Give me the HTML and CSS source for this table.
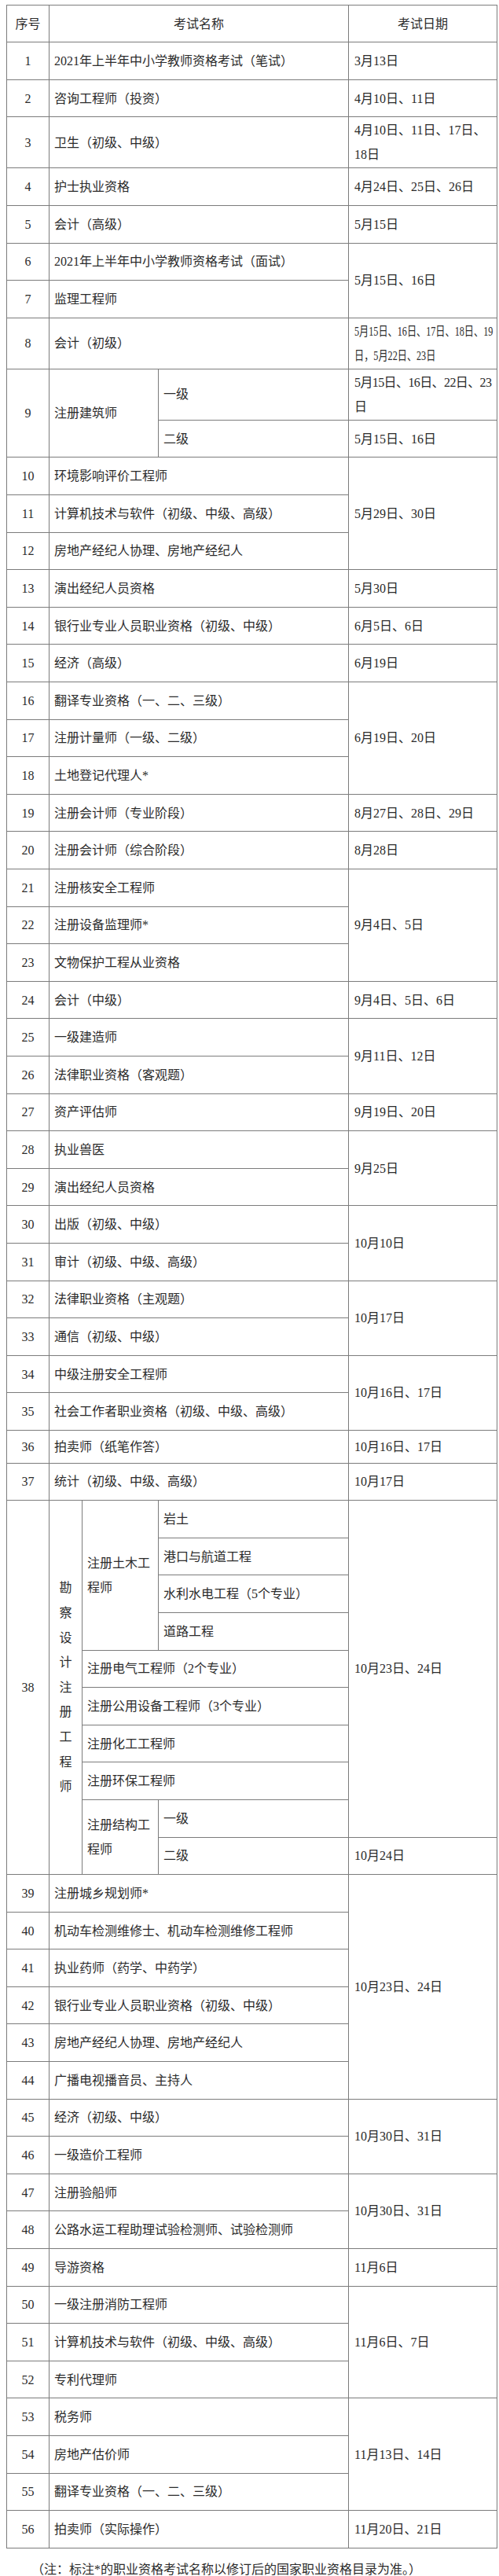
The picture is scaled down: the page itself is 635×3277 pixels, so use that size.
FILE: index.html
```html
<!DOCTYPE html>
<html lang="zh-CN">
<head>
<meta charset="utf-8">
<title>2021年度专业技术人员职业资格考试工作计划</title>
<link rel="stylesheet" href="styles.css">
</head>
<body>
<table class="exam">
  <colgroup>
    <col class="c-no"><col class="c-a"><col class="c-b"><col class="c-c"><col class="c-date">
  </colgroup>
  <tr class="head"><th>序号</th><th colspan="3">考试名称</th><th>考试日期</th></tr>
  <tr><td class="no">1</td><td class="name" colspan="3">2021年上半年中小学教师资格考试（笔试）</td><td class="date">3月13日</td></tr>
  <tr><td class="no">2</td><td class="name" colspan="3">咨询工程师（投资）</td><td class="date">4月10日、11日</td></tr>
  <tr><td class="no">3</td><td class="name" colspan="3">卫生（初级、中级）</td><td class="date">4月10日、11日、17日、<br>18日</td></tr>
  <tr><td class="no">4</td><td class="name" colspan="3">护士执业资格</td><td class="date">4月24日、25日、26日</td></tr>
  <tr><td class="no">5</td><td class="name" colspan="3">会计（高级）</td><td class="date">5月15日</td></tr>
  <tr><td class="no">6</td><td class="name" colspan="3">2021年上半年中小学教师资格考试（面试）</td><td class="date" rowspan="2">5月15日、16日</td></tr>
  <tr><td class="no">7</td><td class="name" colspan="3">监理工程师</td></tr>
  <tr><td class="no">8</td><td class="name" colspan="3">会计（初级）</td><td class="date"><span class="squeeze sq-long">5月15日、16日、17日、18日、19</span><br><span class="squeeze sq-short">日，5月22日、23日</span></td></tr>
  <tr><td class="no" rowspan="2">9</td><td class="name" colspan="2" rowspan="2">注册建筑师</td><td class="name">一级</td><td class="date tight">5月15日、16日、22日、23<br>日</td></tr>
  <tr><td class="name">二级</td><td class="date">5月15日、16日</td></tr>
  <tr><td class="no">10</td><td class="name" colspan="3">环境影响评价工程师</td><td class="date" rowspan="3">5月29日、30日</td></tr>
  <tr><td class="no">11</td><td class="name" colspan="3">计算机技术与软件（初级、中级、高级）</td></tr>
  <tr><td class="no">12</td><td class="name" colspan="3">房地产经纪人协理、房地产经纪人</td></tr>
  <tr><td class="no">13</td><td class="name" colspan="3">演出经纪人员资格</td><td class="date">5月30日</td></tr>
  <tr><td class="no">14</td><td class="name" colspan="3">银行业专业人员职业资格（初级、中级）</td><td class="date">6月5日、6日</td></tr>
  <tr><td class="no">15</td><td class="name" colspan="3">经济（高级）</td><td class="date">6月19日</td></tr>
  <tr><td class="no">16</td><td class="name" colspan="3">翻译专业资格（一、二、三级）</td><td class="date" rowspan="3">6月19日、20日</td></tr>
  <tr><td class="no">17</td><td class="name" colspan="3">注册计量师（一级、二级）</td></tr>
  <tr><td class="no">18</td><td class="name" colspan="3">土地登记代理人*</td></tr>
  <tr><td class="no">19</td><td class="name" colspan="3">注册会计师（专业阶段）</td><td class="date">8月27日、28日、29日</td></tr>
  <tr><td class="no">20</td><td class="name" colspan="3">注册会计师（综合阶段）</td><td class="date">8月28日</td></tr>
  <tr><td class="no">21</td><td class="name" colspan="3">注册核安全工程师</td><td class="date" rowspan="3">9月4日、5日</td></tr>
  <tr><td class="no">22</td><td class="name" colspan="3">注册设备监理师*</td></tr>
  <tr><td class="no">23</td><td class="name" colspan="3">文物保护工程从业资格</td></tr>
  <tr><td class="no">24</td><td class="name" colspan="3">会计（中级）</td><td class="date">9月4日、5日、6日</td></tr>
  <tr><td class="no">25</td><td class="name" colspan="3">一级建造师</td><td class="date" rowspan="2">9月11日、12日</td></tr>
  <tr><td class="no">26</td><td class="name" colspan="3">法律职业资格（客观题）</td></tr>
  <tr><td class="no">27</td><td class="name" colspan="3">资产评估师</td><td class="date">9月19日、20日</td></tr>
  <tr><td class="no">28</td><td class="name" colspan="3">执业兽医</td><td class="date" rowspan="2">9月25日</td></tr>
  <tr><td class="no">29</td><td class="name" colspan="3">演出经纪人员资格</td></tr>
  <tr><td class="no">30</td><td class="name" colspan="3">出版（初级、中级）</td><td class="date" rowspan="2">10月10日</td></tr>
  <tr><td class="no">31</td><td class="name" colspan="3">审计（初级、中级、高级）</td></tr>
  <tr><td class="no">32</td><td class="name" colspan="3">法律职业资格（主观题）</td><td class="date" rowspan="2">10月17日</td></tr>
  <tr><td class="no">33</td><td class="name" colspan="3">通信（初级、中级）</td></tr>
  <tr><td class="no">34</td><td class="name" colspan="3">中级注册安全工程师</td><td class="date" rowspan="2">10月16日、17日</td></tr>
  <tr><td class="no">35</td><td class="name" colspan="3">社会工作者职业资格（初级、中级、高级）</td></tr>
  <tr class="short"><td class="no">36</td><td class="name" colspan="3">拍卖师（纸笔作答）</td><td class="date">10月16日、17日</td></tr>
  <tr><td class="no">37</td><td class="name" colspan="3">统计（初级、中级、高级）</td><td class="date">10月17日</td></tr>
  <tr><td class="no" rowspan="10">38</td><td class="vert" rowspan="10">勘<br>察<br>设<br>计<br>注<br>册<br>工<br>程<br>师</td><td class="name wrap" rowspan="4">注册土木工<br>程师</td><td class="name">岩土</td><td class="date" rowspan="9">10月23日、24日</td></tr>
  <tr><td class="name">港口与航道工程</td></tr>
  <tr><td class="name">水利水电工程（5个专业）</td></tr>
  <tr><td class="name">道路工程</td></tr>
  <tr><td class="name" colspan="2">注册电气工程师（2个专业）</td></tr>
  <tr><td class="name" colspan="2">注册公用设备工程师（3个专业）</td></tr>
  <tr><td class="name" colspan="2">注册化工工程师</td></tr>
  <tr><td class="name" colspan="2">注册环保工程师</td></tr>
  <tr><td class="name wrap" rowspan="2">注册结构工<br>程师</td><td class="name">一级</td></tr>
  <tr><td class="name">二级</td><td class="date">10月24日</td></tr>
  <tr><td class="no">39</td><td class="name" colspan="3">注册城乡规划师*</td><td class="date" rowspan="6">10月23日、24日</td></tr>
  <tr><td class="no">40</td><td class="name" colspan="3">机动车检测维修士、机动车检测维修工程师</td></tr>
  <tr><td class="no">41</td><td class="name" colspan="3">执业药师（药学、中药学）</td></tr>
  <tr><td class="no">42</td><td class="name" colspan="3">银行业专业人员职业资格（初级、中级）</td></tr>
  <tr><td class="no">43</td><td class="name" colspan="3">房地产经纪人协理、房地产经纪人</td></tr>
  <tr><td class="no">44</td><td class="name" colspan="3">广播电视播音员、主持人</td></tr>
  <tr><td class="no">45</td><td class="name" colspan="3">经济（初级、中级）</td><td class="date" rowspan="2">10月30日、31日</td></tr>
  <tr><td class="no">46</td><td class="name" colspan="3">一级造价工程师</td></tr>
  <tr><td class="no">47</td><td class="name" colspan="3">注册验船师</td><td class="date" rowspan="2">10月30日、31日</td></tr>
  <tr><td class="no">48</td><td class="name" colspan="3">公路水运工程助理试验检测师、试验检测师</td></tr>
  <tr><td class="no">49</td><td class="name" colspan="3">导游资格</td><td class="date">11月6日</td></tr>
  <tr><td class="no">50</td><td class="name" colspan="3">一级注册消防工程师</td><td class="date" rowspan="3">11月6日、7日</td></tr>
  <tr><td class="no">51</td><td class="name" colspan="3">计算机技术与软件（初级、中级、高级）</td></tr>
  <tr><td class="no">52</td><td class="name" colspan="3">专利代理师</td></tr>
  <tr><td class="no">53</td><td class="name" colspan="3">税务师</td><td class="date" rowspan="3">11月13日、14日</td></tr>
  <tr><td class="no">54</td><td class="name" colspan="3">房地产估价师</td></tr>
  <tr><td class="no">55</td><td class="name" colspan="3">翻译专业资格（一、二、三级）</td></tr>
  <tr><td class="no">56</td><td class="name" colspan="3">拍卖师（实际操作）</td><td class="date">11月20日、21日</td></tr>
</table>
<p class="note">（注：标注*的职业资格考试名称以修订后的国家职业资格目录为准。）</p>
</body>
</html>
```
FILE: styles.css
```css
html, body {
  background: #ffffff;
}
body {
  margin: 6px 0 0 8px;
  font-family: "Liberation Serif", "Noto Sans CJK SC", serif;
  font-size: 16px;
  color: #2b2b2b;
}
.exam {
  width: 624px;
  table-layout: fixed;
  border-collapse: collapse;
}
.c-no { width: 54px; }
.c-a { width: 42px; }
.c-b { width: 97px; }
.c-c { width: 242px; }
.c-date { width: 189px; }

.exam tr {
  height: 47.6px;
}
.exam tr.head {
  height: 47.3px;
}
.exam tr.short {
  height: 41.7px;
}
.exam th,
.exam td {
  border: 1px solid #7c7c7c;
  padding: 1px 6px;
  line-height: 31px;
  vertical-align: middle;
  font-weight: 400;
  text-align: left;
  white-space: nowrap;
  overflow: hidden;
}
.exam th {
  text-align: center;
}
.exam td.no {
  text-align: center;
  padding: 1px 2px;
}
.exam td.name {
  padding-left: 6px;
}
.exam td.date {
  padding-left: 7px;
  padding-right: 2px;
}
.exam td.tight {
  letter-spacing: -0.6px;
}
.squeeze {
  display: inline-block;
  vertical-align: top;
  transform: scaleX(0.76);
  transform-origin: left center;
}
.sq-long {
  width: 232px;
  margin-right: -56px;
}
.sq-short {
  width: 136px;
  margin-right: -33px;
}
.exam td.vert {
  text-align: center;
  padding: 0;
  line-height: 31.6px;
}
.exam td.wrap {
  line-height: 31px;
}
.note {
  margin: 11px 0 0;
  text-indent: 2em;
  font-size: 16px;
  line-height: 31px;
}
```
